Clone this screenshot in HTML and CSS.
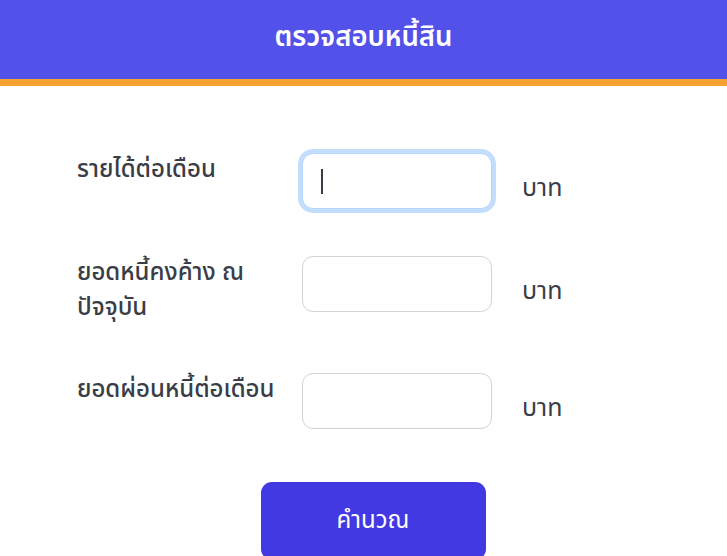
FILE: index.html
```html
<!DOCTYPE html>
<html lang="th">
<head>
  <meta charset="UTF-8">
  <meta name="viewport" content="width=device-width, initial-scale=1.0">
  <title>ตรวจสอบหนี้สิน</title>
  <link rel="stylesheet" href="styles.css">
</head>
<body>

  <header class="topbar">
    <h1>ตรวจสอบหนี้สิน</h1>
  </header>

  <main class="debt-form">
    <!-- รายได้ -->
    <div class="form-row">
      <label for="income">รายได้ต่อเดือน</label>
      <div class="input-wrap">
        <input type="text" id="income" class="money-input focused">
        <span class="caret"></span>
      </div>
      <span class="unit">บาท</span>
    </div>

    <!-- หนี้คงค้าง -->
    <div class="form-row">
      <label for="balance">ยอดหนี้คงค้าง ณ ปัจจุบัน</label>
      <div class="input-wrap">
        <input type="text" id="balance" class="money-input">
      </div>
      <span class="unit">บาท</span>
    </div>

    <!-- ผ่อนต่อเดือน -->
    <div class="form-row">
      <label for="payment">ยอดผ่อนหนี้ต่อเดือน</label>
      <div class="input-wrap">
        <input type="text" id="payment" class="money-input">
      </div>
      <span class="unit">บาท</span>
    </div>

    <div class="actions">
      <button type="button" id="calc-btn">คำนวณ</button>
    </div>
  </main>

</body>
</html>
```

FILE: styles.css
```css
body {
  margin: 0;
  padding: 0;
  font-family: "Noto Sans Thai", "Noto Sans", sans-serif;
  background: #fff;
  color: #3a3d46;
  overflow: hidden;
}

.topbar {
  background: #5252ea;
  height: 79px;
  border-bottom: 7px solid #f5a030;
  display: flex;
  align-items: center;
  justify-content: center;
}

.topbar h1 {
  margin: 0;
  color: #fff;
  font-size: 27.5px;
  font-weight: 600;
  padding-bottom: 4px;
}

.debt-form {
  margin: 67px 0 0 77px;
  width: 592px;
}

.form-row {
  display: grid;
  grid-template-columns: 225px 190px auto;
  align-items: start;
  margin-bottom: 47px;
}

.form-row label {
  font-size: 24px;
  font-weight: 500;
  line-height: 35px;
  padding-right: 10px;
}

.input-wrap {
  position: relative;
  height: 56px;
}

.money-input {
  box-sizing: border-box;
  width: 190px;
  height: 56px;
  border: 1px solid #d4d4d8;
  border-radius: 11px;
  padding: 0 18px;
  font-family: inherit;
  font-size: 22px;
  color: #333;
  outline: none;
}

.money-input.focused {
  border-color: #b8d6fb;
  box-shadow: 0 0 0 4px #c3ddfd;
}

.caret {
  position: absolute;
  left: 19px;
  top: 16px;
  width: 2px;
  height: 25px;
  background: #3a3d46;
}

.unit {
  font-size: 25px;
  line-height: 30px;
  margin-top: 20px;
  padding-left: 30px;
}

.actions {
  display: flex;
  justify-content: center;
  margin-top: 53px;
}

#calc-btn {
  width: 225px;
  height: 78px;
  background: #4339e2;
  color: #fff;
  border: none;
  border-radius: 11px;
  font-family: inherit;
  font-size: 24px;
  padding: 0;
  cursor: pointer;
}
```
